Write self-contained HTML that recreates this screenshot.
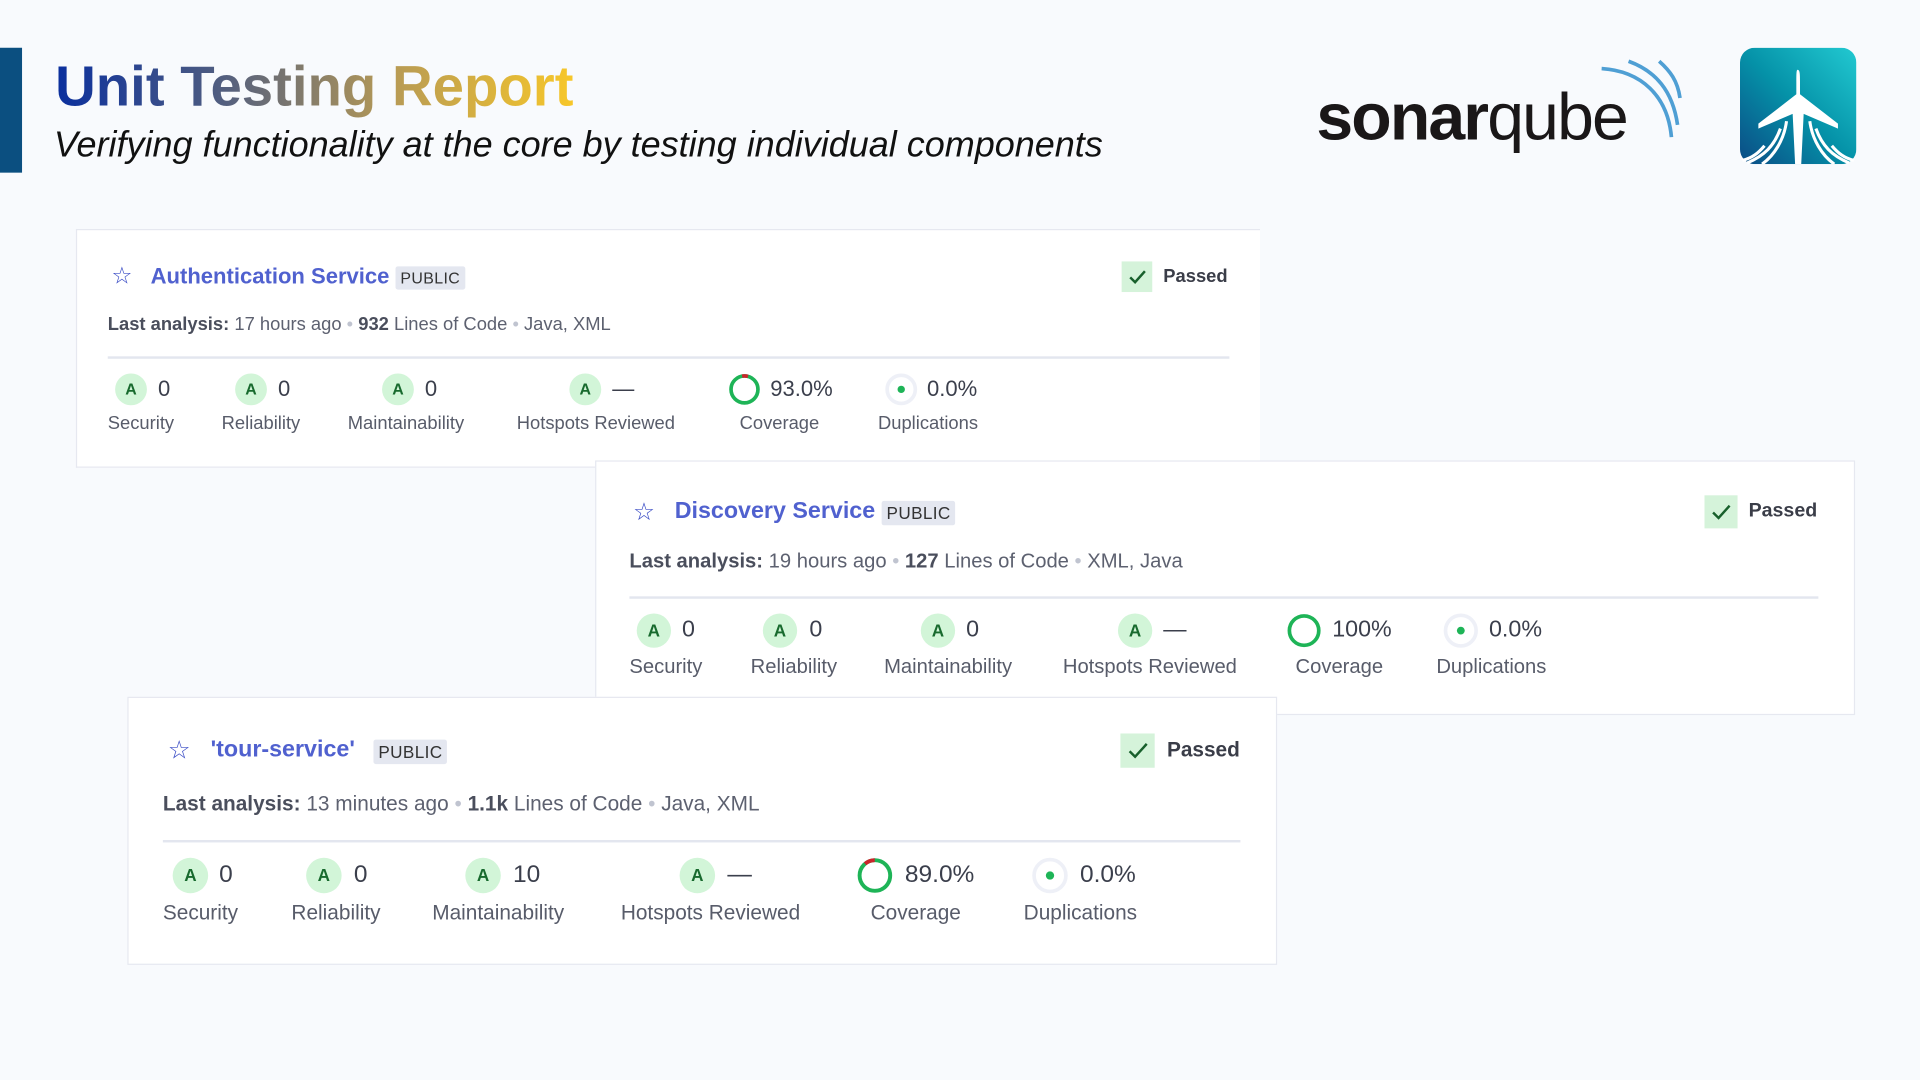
<!DOCTYPE html>
<html><head><meta charset="utf-8"><style>
html,body{margin:0;padding:0;width:1920px;height:1080px;overflow:hidden;background:#f8fafd;}
#w{position:absolute;left:0;top:0;width:1568px;height:882px;transform:scale(1.22449);transform-origin:0 0;font-family:"Liberation Sans",sans-serif;}
.a{position:absolute;transform:translateY(-50%);white-space:nowrap;}
.card{position:absolute;background:#fff;border:1px solid #e6e8f0;box-sizing:border-box;}
.t{color:#5061cf;font-weight:600;}
.pub{background:#e4e7f0;color:#333;font-size:13px;padding:2px 4px;border-radius:2px;font-weight:500;letter-spacing:.3px}
.meta{color:#5d6170;}
.meta b{color:#4a4e5c;}
.dot{color:#c0c4d0;}
.b{border-radius:50%;background:#d2f5d8;color:#186a2e;text-align:center;font-weight:600;}
.v{color:#3b3f4c;font-weight:500;}
.l{color:#585c6a;}
.pchk{background:#d5f3da;}
.pt{color:#3a3d48;font-weight:600;}
.hr{position:absolute;height:2px;background:#e3e6ef;}
</style></head><body><div id="w">
<div style="position:absolute;left:0;top:39px;width:18px;height:102px;background:#0b4f80"></div>
<div class="a" style="left:45px;top:70px;font-size:46px;font-weight:bold;background:linear-gradient(90deg,#0a2f9e 0%,#4b5a82 30%,#b79a55 65%,#f7c72a 100%);-webkit-background-clip:text;background-clip:text;color:transparent;">Unit Testing Report</div>
<div class="a" style="left:44px;top:119px;font-size:29.4px;font-style:italic;color:#111">Verifying functionality at the core by testing individual components</div>
<div class="a" style="left:1075px;top:96px;font-size:54px;color:#1a1718;letter-spacing:-1.5px;line-height:1"><span style="font-weight:bold">sonar</span><span>qube</span></div>
<svg style="position:absolute;left:1300px;top:48px" width="80" height="70" viewBox="0 0 80 70"><g fill="none" stroke="#4f9fd4" stroke-width="3"><path d="M8 8 C40 10 62 30 65 64"/><path d="M30 2 C52 10 66 26 70 54"/><path d="M55 2 C64 10 70 18 72 32"/></g></svg>
<svg style="position:absolute;left:1421px;top:39px" width="95" height="95" viewBox="0 0 95 95"><defs><linearGradient id="g" x1="1" y1="0" x2="0" y2="1"><stop offset="0" stop-color="#22c9d1"/><stop offset=".5" stop-color="#0592a8"/><stop offset="1" stop-color="#0b4b85"/></linearGradient></defs><rect width="95" height="95" rx="12" fill="url(#g)"/><path d="M47 18 C49 18 49 22 49 28 L49 38 L80 62 L80 66 L52 54 L50 95 L45 95 L43 54 L15 66 L15 62 L46 38 L46 28 C46 22 46 18 47 18Z" fill="#fff"/><g fill="none" stroke="#fff" stroke-width="2.5"><path d="M38 60 C36 75 28 88 18 95"/><path d="M33 66 C28 80 20 88 6 94"/><path d="M20 80 C15 86 10 90 2 92"/><path d="M57 60 C59 75 67 88 77 95"/><path d="M62 66 C67 80 75 88 89 94"/><path d="M75 80 C80 86 85 90 93 92"/></g></svg>

<!-- card1 -->
<div class="card" style="left:62px;top:187px;width:967px;height:195px;border-right:none"></div>
<div class="a" style="left:91px;top:226px;font-size:19px;color:#3d4fc6">☆</div>
<div class="a t" style="left:123px;top:226px;font-size:18px">Authentication Service</div>
<div class="a pub" style="left:323px;top:227px">PUBLIC</div>
<div class="a pchk" style="left:916px;top:226px;width:25px;height:25px"><svg width="25" height="25"><path d="M7 13 l4 4 l8 -9" fill="none" stroke="#18602c" stroke-width="2"/></svg></div>
<div class="a pt" style="left:950px;top:226px;font-size:15px">Passed</div>
<div class="a meta" style="left:88px;top:265px;font-size:15px"><b>Last analysis:</b> 17 hours ago <span class="dot">•</span> <b>932</b> Lines of Code <span class="dot">•</span> Java, XML</div>
<div class="hr" style="left:88px;top:291px;width:916px"></div>
<div class="a b" style="left:94px;top:318px;width:26px;height:26px;line-height:26px;font-size:13px">A</div><div class="a v" style="left:129px;top:318px;font-size:18px">0</div>
<div class="a b" style="left:192px;top:318px;width:26px;height:26px;line-height:26px;font-size:13px">A</div><div class="a v" style="left:227px;top:318px;font-size:18px">0</div>
<div class="a b" style="left:312px;top:318px;width:26px;height:26px;line-height:26px;font-size:13px">A</div><div class="a v" style="left:347px;top:318px;font-size:18px">0</div>
<div class="a b" style="left:465px;top:318px;width:26px;height:26px;line-height:26px;font-size:13px">A</div><div class="a v" style="left:500px;top:318px;font-size:18px">—</div>
<svg class="a" style="left:594px;top:318px" width="28" height="28"><circle cx="14" cy="14" r="11" fill="none" stroke="#1eb457" stroke-width="3"/><circle cx="14" cy="14" r="11" fill="none" stroke="#c9252b" stroke-width="3" stroke-dasharray="4.8 100" transform="rotate(-100 14 14)"/></svg><div class="a v" style="left:629px;top:318px;font-size:18px">93.0%</div>
<svg class="a" style="left:722px;top:318px" width="28" height="28"><circle cx="14" cy="14" r="11.5" fill="none" stroke="#eef0f7" stroke-width="3"/><circle cx="14" cy="14" r="3" fill="#1eb457"/></svg><div class="a v" style="left:757px;top:318px;font-size:18px">0.0%</div>
<div class="a l" style="left:88px;top:346px;font-size:15px">Security</div>
<div class="a l" style="left:181px;top:346px;font-size:15px">Reliability</div>
<div class="a l" style="left:284px;top:346px;font-size:15px">Maintainability</div>
<div class="a l" style="left:422px;top:346px;font-size:15px">Hotspots Reviewed</div>
<div class="a l" style="left:604px;top:346px;font-size:15px">Coverage</div>
<div class="a l" style="left:717px;top:346px;font-size:15px">Duplications</div>

<!-- card2 -->
<div class="card" style="left:486px;top:376px;width:1029px;height:208px"></div>
<div class="a" style="left:517px;top:418px;font-size:20px;color:#3d4fc6">☆</div>
<div class="a t" style="left:551px;top:418px;font-size:19px">Discovery Service</div>
<div class="a pub" style="left:720px;top:419px;font-size:14px">PUBLIC</div>
<div class="a pchk" style="left:1392px;top:418px;width:27px;height:27px"><svg width="27" height="27"><path d="M7 14 l4.5 4.5 l9 -10" fill="none" stroke="#18602c" stroke-width="2"/></svg></div>
<div class="a pt" style="left:1428px;top:418px;font-size:16px">Passed</div>
<div class="a meta" style="left:514px;top:459px;font-size:16.5px"><b>Last analysis:</b> 19 hours ago <span class="dot">•</span> <b>127</b> Lines of Code <span class="dot">•</span> XML, Java</div>
<div class="hr" style="left:514px;top:487px;width:971px"></div>
<div class="a b" style="left:520px;top:515px;width:28px;height:28px;line-height:28px;font-size:14px">A</div><div class="a v" style="left:557px;top:515px;font-size:19px">0</div>
<div class="a b" style="left:623px;top:515px;width:28px;height:28px;line-height:28px;font-size:14px">A</div><div class="a v" style="left:661px;top:515px;font-size:19px">0</div>
<div class="a b" style="left:752px;top:515px;width:28px;height:28px;line-height:28px;font-size:14px">A</div><div class="a v" style="left:789px;top:515px;font-size:19px">0</div>
<div class="a b" style="left:913px;top:515px;width:28px;height:28px;line-height:28px;font-size:14px">A</div><div class="a v" style="left:950px;top:515px;font-size:19px">—</div>
<svg class="a" style="left:1050px;top:515px" width="30" height="30"><circle cx="15" cy="15" r="12" fill="none" stroke="#1eb457" stroke-width="3"/></svg><div class="a v" style="left:1088px;top:515px;font-size:19px">100%</div>
<svg class="a" style="left:1178px;top:515px" width="30" height="30"><circle cx="15" cy="15" r="12.5" fill="none" stroke="#eef0f7" stroke-width="3"/><circle cx="15" cy="15" r="3.2" fill="#1eb457"/></svg><div class="a v" style="left:1216px;top:515px;font-size:19px">0.0%</div>
<div class="a l" style="left:514px;top:545px;font-size:16.5px">Security</div>
<div class="a l" style="left:613px;top:545px;font-size:16.5px">Reliability</div>
<div class="a l" style="left:722px;top:545px;font-size:16.5px">Maintainability</div>
<div class="a l" style="left:868px;top:545px;font-size:16.5px">Hotspots Reviewed</div>
<div class="a l" style="left:1058px;top:545px;font-size:16.5px">Coverage</div>
<div class="a l" style="left:1173px;top:545px;font-size:16.5px">Duplications</div>

<!-- card3 -->
<div class="card" style="left:104px;top:569px;width:939px;height:219px"></div>
<div class="a" style="left:137px;top:613px;font-size:21px;color:#3d4fc6">☆</div>
<div class="a t" style="left:172px;top:613px;font-size:19px">'tour-service'</div>
<div class="a pub" style="left:305px;top:614px;font-size:14px">PUBLIC</div>
<div class="a pchk" style="left:915px;top:613px;width:28px;height:28px"><svg width="28" height="28"><path d="M7.5 14.5 l4.5 4.5 l9.5 -10.5" fill="none" stroke="#18602c" stroke-width="2"/></svg></div>
<div class="a pt" style="left:953px;top:613px;font-size:17px">Passed</div>
<div class="a meta" style="left:133px;top:657px;font-size:17px"><b>Last analysis:</b> 13 minutes ago <span class="dot">•</span> <b>1.1k</b> Lines of Code <span class="dot">•</span> Java, XML</div>
<div class="hr" style="left:133px;top:686px;width:880px"></div>
<div class="a b" style="left:141px;top:715px;width:29px;height:29px;line-height:29px;font-size:14px">A</div><div class="a v" style="left:179px;top:715px;font-size:20px">0</div>
<div class="a b" style="left:250px;top:715px;width:29px;height:29px;line-height:29px;font-size:14px">A</div><div class="a v" style="left:289px;top:715px;font-size:20px">0</div>
<div class="a b" style="left:380px;top:715px;width:29px;height:29px;line-height:29px;font-size:14px">A</div><div class="a v" style="left:419px;top:715px;font-size:20px">10</div>
<div class="a b" style="left:555px;top:715px;width:29px;height:29px;line-height:29px;font-size:14px">A</div><div class="a v" style="left:594px;top:715px;font-size:20px">—</div>
<svg class="a" style="left:699px;top:715px" width="31" height="31"><circle cx="15.5" cy="15.5" r="12.5" fill="none" stroke="#1eb457" stroke-width="3.2"/><circle cx="15.5" cy="15.5" r="12.5" fill="none" stroke="#c9252b" stroke-width="3.2" stroke-dasharray="8.6 100" transform="rotate(-130 15.5 15.5)"/></svg><div class="a v" style="left:739px;top:715px;font-size:20px">89.0%</div>
<svg class="a" style="left:842px;top:715px" width="31" height="31"><circle cx="15.5" cy="15.5" r="13" fill="none" stroke="#eef0f7" stroke-width="3"/><circle cx="15.5" cy="15.5" r="3.4" fill="#1eb457"/></svg><div class="a v" style="left:882px;top:715px;font-size:20px">0.0%</div>
<div class="a l" style="left:133px;top:746px;font-size:17px">Security</div>
<div class="a l" style="left:238px;top:746px;font-size:17px">Reliability</div>
<div class="a l" style="left:353px;top:746px;font-size:17px">Maintainability</div>
<div class="a l" style="left:507px;top:746px;font-size:17px">Hotspots Reviewed</div>
<div class="a l" style="left:711px;top:746px;font-size:17px">Coverage</div>
<div class="a l" style="left:836px;top:746px;font-size:17px">Duplications</div>
</div></body></html>
